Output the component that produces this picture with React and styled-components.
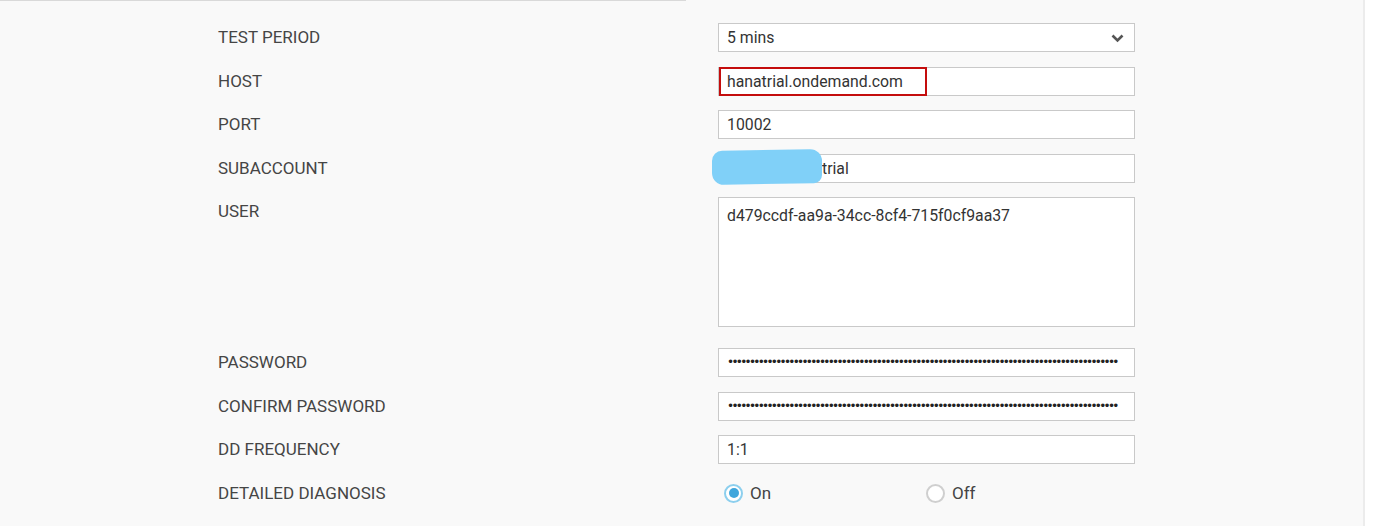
import styled, { createGlobalStyle } from "styled-components";

const GlobalStyle = createGlobalStyle`
  html, body {
    margin: 0;
    padding: 0;
    background: #ffffff;
  }
  body {
    font-family: Roboto, "Liberation Sans", Arial, sans-serif;
    color: #333;
  }
`;

const Page = styled.div`
  display: flex;
  width: 1378px;
  height: 526px;
  overflow: hidden;
`;

const Panel = styled.div`
  width: 1365px;
  flex-shrink: 0;
  background: #f9f9f9;
  border-right: 2px solid #ececec;
  box-sizing: border-box;
`;

const TopRule = styled.div`
  width: 686px;
  height: 1px;
  background: #d9d9d9;
`;

const Form = styled.div`
  display: grid;
  grid-template-columns: 500px 417px;
  row-gap: 14.5px;
  padding: 22px 0 0 218px;
`;

const Label = styled.div`
  font-size: 17px;
  line-height: 29px;
  height: 29px;
  color: #454545;
  white-space: nowrap;
`;

const Field = styled.div`
  position: relative;
  margin-bottom: ${(p) => p.$after || 0}px;
`;

const Box = styled.div`
  position: relative;
  box-sizing: border-box;
  height: ${(p) => p.$h || 29}px;
  background: #fff;
  border: 1px solid #c9c9c9;
  padding: ${(p) => (p.$multi ? "8px 8px" : "0 8px")};
  display: flex;
  align-items: ${(p) => (p.$multi ? "flex-start" : "center")};
  font-size: 15.8px;
  line-height: ${(p) => (p.$multi ? "20px" : "27px")};
  color: #333;
  overflow: hidden;
  white-space: nowrap;
`;

const Chevron = styled.svg`
  position: absolute;
  right: 10px;
  top: 10px;
`;

const Dots = styled.span`
  font-family: "DejaVu Sans", sans-serif;
  font-size: 12px;
  letter-spacing: -2.7px;
  color: #222;
`;

const Highlight = styled.div`
  position: absolute;
  left: 1px;
  top: 0;
  width: 208px;
  height: 29px;
  border: 2px solid #c40d0d;
  box-sizing: border-box;
  pointer-events: none;
`;

const Scribble = styled.div`
  position: absolute;
  left: -6px;
  top: -4px;
  width: 110px;
  height: 34px;
  background: #80d0f8;
  border-radius: 10px 12px 8px 12px;
  transform: skewY(-1deg);
`;

const RadioRow = styled.div`
  display: flex;
  align-items: center;
  height: 29px;
`;

const Option = styled.label`
  display: flex;
  align-items: center;
  gap: 7px;
  box-sizing: border-box;
  width: 202px;
  padding-left: 6px;
  font-size: 17px;
  color: #444;
`;

const Circle = styled.span`
  width: 19px;
  height: 19px;
  box-sizing: border-box;
  border-radius: 50%;
  border: 2px solid ${(p) => (p.$on ? "#8ccfee" : "#cfcfcf")};
  background: #fff;
  display: flex;
  align-items: center;
  justify-content: center;
  &::after {
    content: "";
    width: 10px;
    height: 10px;
    border-radius: 50%;
    background: ${(p) => (p.$on ? "#3ea6dc" : "transparent")};
  }
`;

const dots = "•".repeat(89);

export default function App() {
  return (
    <>
      <GlobalStyle />
      <Page>
        <Panel>
          <TopRule />
          <Form>
            <Label>TEST PERIOD</Label>
            <Field>
              <Box>
                5 mins
                <Chevron width="13" height="9" viewBox="0 0 13 9">
                  <path d="M1.5 1.5 L6.5 6.5 L11.5 1.5" fill="none" stroke="#555" strokeWidth="2.6" />
                </Chevron>
              </Box>
            </Field>

            <Label>HOST</Label>
            <Field>
              <Box>hanatrial.ondemand.com</Box>
              <Highlight />
            </Field>

            <Label>PORT</Label>
            <Field>
              <Box>10002</Box>
            </Field>

            <Label>SUBACCOUNT</Label>
            <Field>
              <Box>
                <span style={{ paddingLeft: 95 }}>trial</span>
              </Box>
              <Scribble />
            </Field>

            <Label>USER</Label>
            <Field $after={6.5}>
              <Box $h={130} $multi>d479ccdf-aa9a-34cc-8cf4-715f0cf9aa37</Box>
            </Field>

            <Label>PASSWORD</Label>
            <Field>
              <Box>
                <Dots>{dots}</Dots>
              </Box>
            </Field>

            <Label>CONFIRM PASSWORD</Label>
            <Field>
              <Box>
                <Dots>{dots}</Dots>
              </Box>
            </Field>

            <Label>DD FREQUENCY</Label>
            <Field>
              <Box>1:1</Box>
            </Field>

            <Label>DETAILED DIAGNOSIS</Label>
            <RadioRow>
              <Option>
                <Circle $on />
                On
              </Option>
              <Option>
                <Circle />
                Off
              </Option>
            </RadioRow>
          </Form>
        </Panel>
      </Page>
    </>
  );
}
